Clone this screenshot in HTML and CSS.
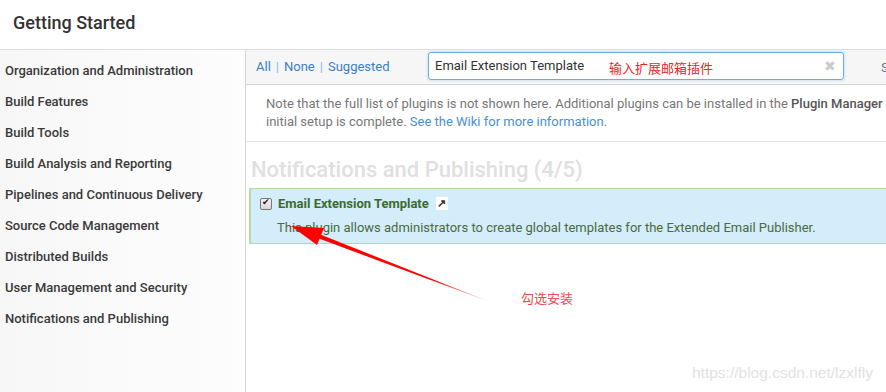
FILE: index.html
```html
<!DOCTYPE html>
<html lang="en">
<head>
    <meta charset="UTF-8">
    <title>Getting Started</title>
    <link rel="stylesheet" href="styles.css">
</head>
<body>
    <div class="header">Getting Started</div>

    <div class="wizard">
        <div class="sidebar">
            <a href="#">Organization and Administration</a>
            <a href="#">Build Features</a>
            <a href="#">Build Tools</a>
            <a href="#">Build Analysis and Reporting</a>
            <a href="#">Pipelines and Continuous Delivery</a>
            <a href="#">Source Code Management</a>
            <a href="#">Distributed Builds</a>
            <a href="#">User Management and Security</a>
            <a href="#">Notifications and Publishing</a>
        </div>

        <div class="main">
            <div class="toolbar">
                <div class="filters">
                    <a href="#">All</a><span class="sep">|</span><a href="#">None</a><span class="sep">|</span><a href="#">Suggested</a>
                </div>
                <div class="search">
                    <input type="text" value="Email Extension Template">
                    <span class="clear">&#x2716;</span>
                </div>
                <a href="#" class="selected">Selected (0)</a>
            </div>

            <div class="note">
                Note that the full list of plugins is not shown here. Additional plugins can be installed in the <b>Plugin Manager</b> once the<br>
                initial setup is complete. <a href="#">See the Wiki for more information</a>.
            </div>

            <h2 class="category">Notifications and Publishing (4/5)</h2>

            <div class="plugin">
                <label class="plugin-title">
                    <input type="checkbox" checked>
                    <span>Email Extension Template</span>
                    <span class="ext-link">&#x2197;</span>
                </label>
                <div class="plugin-desc">This plugin allows administrators to create global templates for the Extended Email Publisher.</div>
            </div>
        </div>
    </div>

    <!-- screenshot annotations -->
    <span class="note-red search-hint">输入扩展邮箱插件</span>
    <span class="note-red check-hint">勾选安装</span>
    <svg class="arrow" width="886" height="392" viewBox="0 0 886 392">
        <defs>
            <linearGradient id="fade" x1="292" y1="226" x2="490" y2="302" gradientUnits="userSpaceOnUse">
                <stop offset="0.7" stop-color="#ff0000"/>
                <stop offset="1" stop-color="#ff0000" stop-opacity="0.25"/>
            </linearGradient>
        </defs>
        <polygon fill="url(#fade)" points="319,238.6 321,234.8 490,302"/>
        <polygon fill="#ff0000" points="291,226 317,245 324,228"/>
    </svg>
    <div class="watermark">https://blog.csdn.net/lzxlfly</div>
</body>
</html>
```

FILE: styles.css
```css
body {
    margin: 0;
    font-family: Roboto, "Noto Sans", sans-serif;
    color: #333;
    background: #fff;
    width: 886px;
    height: 392px;
    overflow: hidden;
    position: relative;
}
a {
    text-decoration: none;
}
/* Header */
.header {
    height: 49px;
    line-height: 45px;
    padding-left: 13px;
    font-size: 18px;
    font-weight: 500;
    color: #333;
    border-bottom: 1px solid #ddd;
}
/* Layout */
.wizard {
    display: flex;
    height: 342px;
}
.sidebar {
    width: 246px;
    flex-shrink: 0;
    border-right: 1px solid #d6d6d6;
    background: linear-gradient(to right, #f7f7f7, #fdfdfd);
    padding-top: 5px;
    box-sizing: border-box;
}
.sidebar a {
    display: block;
    height: 31px;
    line-height: 31px;
    padding-left: 5px;
    font-size: 13px;
    font-weight: 500;
    color: #3a3a3a;
    white-space: nowrap;
}
.main {
    flex: 1;
    overflow: hidden;
    min-width: 0;
}
/* Toolbar */
.toolbar {
    width: 760px;
    height: 34px;
    display: flex;
    align-items: center;
    background: #f6f6f6;
    border-bottom: 1px solid #d6d6d6;
}
.filters {
    width: 182px;
    padding-left: 10px;
    font-size: 13px;
    box-sizing: border-box;
    margin-top: -2px;
}
.filters a {
    color: #3a7fc8;
}
.sep {
    color: #8ab8e6;
    margin: 0 5px;
}
.search {
    position: relative;
    width: 416px;
    height: 28px;
    margin-top: -2px;
}
.search input {
    width: 100%;
    height: 100%;
    box-sizing: border-box;
    border: 1px solid #66afe9;
    border-radius: 3px;
    padding: 0 6px 2px;
    font-family: Roboto, sans-serif;
    font-size: 13px;
    color: #333;
    background: #fff;
    box-shadow: 0 0 3px rgba(102, 175, 233, 0.5);
}
.clear {
    position: absolute;
    right: 8px;
    top: 6px;
    font-size: 14px;
    color: #cbcbcb;
}
.selected {
    margin-left: 37px;
    font-size: 13px;
    color: #3a7fc8;
    white-space: nowrap;
}
/* Note */
.note {
    width: 760px;
    padding: 10px 0 10px 20px;
    font-size: 13px;
    line-height: 18px;
    color: #777;
    white-space: nowrap;
    border-bottom: 1px solid #e4e4e4;
}
.note b {
    color: #555;
    font-weight: 500;
}
.note a {
    color: #4a90d2;
}
/* Plugin list */
.category {
    margin: 14px 0 4px 5px;
    font-size: 22px;
    font-weight: 500;
    color: #e0e0e0;
    line-height: 28px;
}
.plugin {
    margin-left: 3px;
    width: 700px;
    height: 56px;
    box-sizing: border-box;
    background: #d4edfa;
    border: 1px solid #b4dca0;
    border-left-width: 2px;
    padding: 7px 0 0 8px;
}
.plugin-title {
    display: flex;
    align-items: center;
    font-size: 13px;
    font-weight: 700;
    color: #3d6b2e;
}
.plugin-title input {
    appearance: none;
    -webkit-appearance: none;
    position: relative;
    box-sizing: border-box;
    margin: 0 6px 0 1px;
    width: 12px;
    height: 12px;
    border: 1px solid #777;
    border-radius: 2px;
    background: linear-gradient(#f2f2f2, #d8d8d8);
}
.plugin-title input:checked::before {
    content: "\2714";
    position: absolute;
    left: 1px;
    top: -2px;
    font-size: 9px;
    color: #222;
}
.ext-link {
    display: inline-block;
    margin-left: 7px;
    width: 12px;
    height: 13px;
    line-height: 13px;
    text-align: center;
    font-size: 11px;
    color: #333;
    background: #fff;
}
.plugin-desc {
    margin: 9px 0 0 18px;
    font-size: 13px;
    color: #4b6a3e;
}
/* Annotations over the screenshot */
.note-red {
    position: absolute;
    font-size: 13px;
    font-family: "Noto Sans CJK SC", sans-serif;
}
.search-hint {
    left: 609px;
    top: 58px;
    color: #e8252a;
}
.check-hint {
    left: 521px;
    top: 288px;
    color: #ee4a4a;
}
.arrow {
    position: absolute;
    left: 0;
    top: 0;
}
.watermark {
    position: absolute;
    left: 692px;
    top: 364px;
    font-family: "Liberation Sans", Arial, sans-serif;
    font-size: 15.5px;
    color: #e2e2e2;
}
```
